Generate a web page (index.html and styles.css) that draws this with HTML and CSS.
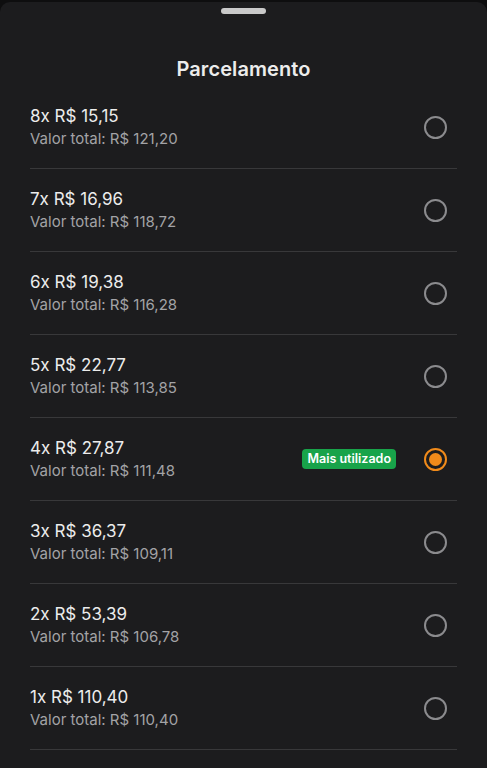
FILE: index.html
```html
<!DOCTYPE html>
<html lang="pt-BR">
<head>
<meta charset="utf-8">
<link rel="stylesheet" href="styles.css">
<title>Parcelamento</title>
</head>
<body>
<div class="sheet">
  <div class="handle"></div>
  <h1 class="title">Parcelamento</h1>
  <ul class="list">
    <li class="row"><div class="info"><div class="main">8x R$ 15,15</div><div class="sub">Valor total: R$ 121,20</div></div><span class="radio"></span></li>
    <li class="row"><div class="info"><div class="main">7x R$ 16,96</div><div class="sub">Valor total: R$ 118,72</div></div><span class="radio"></span></li>
    <li class="row"><div class="info"><div class="main">6x R$ 19,38</div><div class="sub">Valor total: R$ 116,28</div></div><span class="radio"></span></li>
    <li class="row"><div class="info"><div class="main">5x R$ 22,77</div><div class="sub">Valor total: R$ 113,85</div></div><span class="radio"></span></li>
    <li class="row"><div class="info"><div class="main">4x R$ 27,87</div><div class="sub">Valor total: R$ 111,48</div></div><span class="badge">Mais utilizado</span><span class="radio selected"></span></li>
    <li class="row"><div class="info"><div class="main">3x R$ 36,37</div><div class="sub">Valor total: R$ 109,11</div></div><span class="radio"></span></li>
    <li class="row"><div class="info"><div class="main">2x R$ 53,39</div><div class="sub">Valor total: R$ 106,78</div></div><span class="radio"></span></li>
    <li class="row"><div class="info"><div class="main">1x R$ 110,40</div><div class="sub">Valor total: R$ 110,40</div></div><span class="radio"></span></li>
  </ul>
</div>
</body>
</html>
```
FILE: styles.css
```css
html, body {
  margin: 0;
  padding: 0;
  background: #0e0e0f;
  font-family: Inter, "Noto Sans", "Liberation Sans", sans-serif;
  -webkit-font-smoothing: antialiased;
}
.sheet {
  margin-top: 2px;
  background: #1c1c1e;
  border-radius: 10px 10px 0 0;
  min-height: 766px;
  padding: 0 30px;
  box-sizing: border-box;
}
.handle {
  width: 45px;
  height: 6px;
  border-radius: 3px;
  background: #c9c9c9;
  margin: 0 auto;
  position: relative;
  top: 6px;
}
.title {
  margin: 0;
  padding-top: 47px;
  height: 31px;
  line-height: 28px;
  text-align: center;
  font-size: 20px;
  font-weight: 600;
  color: #ececec;
  letter-spacing: 0.1px;
}
.list {
  list-style: none;
  margin: 0;
  padding: 0;
}
.row {
  height: 82px;
  border-bottom: 1px solid #38383a;
  display: flex;
  align-items: center;
  padding-right: 10px;
}
.info {
  flex: 1;
  display: flex;
  flex-direction: column;
  gap: 2px;
}
.main {
  font-size: 17px;
  line-height: 21px;
  color: #ececec;
}
.sub {
  font-size: 15px;
  line-height: 19px;
  color: #a3a3a6;
}
.badge {
  background: #18a34a;
  color: #ffffff;
  font-size: 12.5px;
  font-weight: 600;
  line-height: 20px;
  padding: 0 5px;
  border-radius: 4px;
  margin-right: 28px;
}
.radio {
  width: 19px;
  height: 19px;
  border: 2px solid #8b8b8e;
  border-radius: 50%;
  box-sizing: content-box;
  position: relative;
}
.radio.selected {
  border-color: #f08a1a;
}
.radio.selected::after {
  content: "";
  position: absolute;
  left: 3px;
  top: 3px;
  width: 13px;
  height: 13px;
  border-radius: 50%;
  background: #f08a1a;
}
```
